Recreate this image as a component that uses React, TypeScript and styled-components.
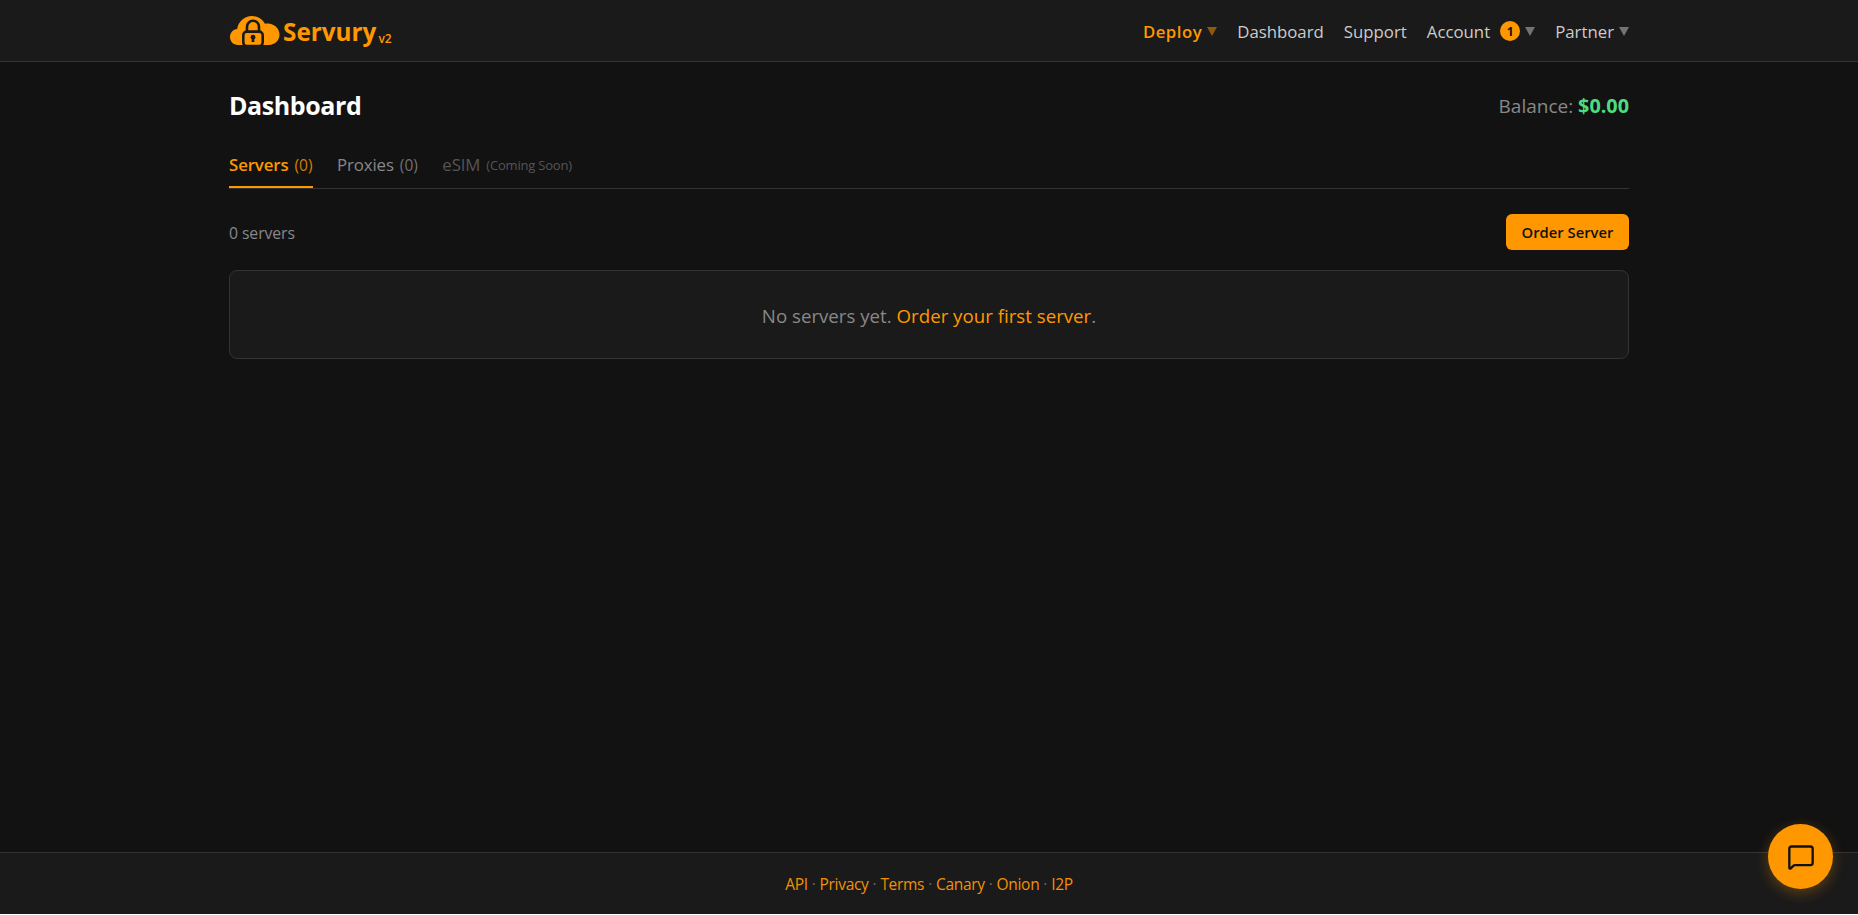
import React from "react";
import styled, { createGlobalStyle } from "styled-components";
import { MessageSquare } from "lucide-react";

const Global = createGlobalStyle`
  html, body { margin: 0; padding: 0; background: #fff; }
  body { font-family: "Open Sans", "Noto Sans", "Liberation Sans", sans-serif; }
  a { text-decoration: none; color: inherit; }
`;

const Page = styled.div`
  height: calc(100vh - 1px);
  display: flex;
  flex-direction: column;
  background: #121212;
  overflow: hidden;
`;

const TopBar = styled.header`
  flex: none;
  height: 61px;
  background: #1a1a1a;
  border-bottom: 1px solid #333;
`;

const Wrap = styled.div`
  width: 1400px;
  margin: 0 auto;
`;

const TopInner = styled(Wrap)`
  height: 100%;
  display: flex;
  align-items: center;
  justify-content: space-between;
`;

const Brand = styled.a`
  display: flex;
  align-items: center;
  gap: 3px;
  color: #ff9800;
`;

const BrandName = styled.span`
  font-size: 24.3px;
  font-weight: 700;
  padding-top: 1px;
`;

const BrandVersion = styled.span`
  font-size: 12px;
  font-weight: 600;
  margin: 15px 0 0 -1px;
`;

const Nav = styled.nav`
  display: flex;
  align-items: center;
  gap: 20px;
  padding-top: 1px;
`;

const NavItem = styled.a<{ $active?: boolean }>`
  display: flex;
  align-items: center;
  font-size: 16.8px;
  letter-spacing: ${(p) => (p.$active ? "0.5px" : "0")};
  font-weight: ${(p) => (p.$active ? 600 : 400)};
  color: ${(p) => (p.$active ? "#ff9800" : "#ccc")};
`;

const Caret = styled.span`
  width: 0;
  height: 0;
  margin-left: 5px;
  border-left: 5px solid transparent;
  border-right: 5px solid transparent;
  border-top: 9px solid currentColor;
  opacity: 0.5;
`;

const Badge = styled.span`
  width: 20px;
  height: 20px;
  margin-left: 10px;
  border-radius: 50%;
  background: #ff9800;
  color: #121212;
  font-size: 12px;
  font-weight: 700;
  display: flex;
  align-items: center;
  justify-content: center;
`;

const Main = styled(Wrap)`
  flex: 1;
  padding-top: 23px;
`;

const TitleRow = styled.div`
  height: 40px;
  display: flex;
  align-items: center;
  justify-content: space-between;
`;

const Title = styled.h1`
  margin: 0;
  font-size: 25px;
  font-weight: 700;
  letter-spacing: -0.4px;
  color: #fff;
`;

const Balance = styled.div`
  font-size: 19px;
  color: #888;
`;

const BalanceValue = styled.strong`
  font-weight: 700;
  font-size: 19.8px;
  color: #4ade80;
`;

const Tabs = styled.div`
  display: flex;
  gap: 24.5px;
  margin-top: 20px;
  height: 43px;
  border-bottom: 1px solid #333;
`;

const Tab = styled.a<{ $active?: boolean; $disabled?: boolean }>`
  height: 43px;
  box-sizing: border-box;
  display: flex;
  align-items: center;
  gap: 6px;
  padding-bottom: 2px;
  font-size: 16.8px;
  letter-spacing: -0.1px;
  font-weight: ${(p) => (p.$active ? 600 : 400)};
  color: ${(p) => (p.$active ? "#ff9800" : p.$disabled ? "#555" : "#888")};
  border-bottom: 2px solid ${(p) => (p.$active ? "#ff9800" : "transparent")};
`;

const TabNote = styled.small<{ $tiny?: boolean }>`
  font-size: ${(p) => (p.$tiny ? "13px" : "15.5px")};
  letter-spacing: ${(p) => (p.$tiny ? "-0.2px" : "0")};
  font-weight: 400;
  opacity: ${(p) => (p.$tiny ? 1 : 0.8)};
`;

const ListBar = styled.div`
  margin-top: 25px;
  height: 36px;
  display: flex;
  align-items: center;
  justify-content: space-between;
`;

const Count = styled.span`
  font-size: 15.8px;
  letter-spacing: -0.1px;
  padding-top: 1px;
  color: #888;
`;

const OrderButton = styled.button`
  width: 123px;
  height: 36px;
  padding: 0;
  border: 0;
  border-radius: 6px;
  background: #ff9800;
  color: #111;
  font: 600 14.8px "Open Sans", sans-serif;
`;

const EmptyCard = styled.div`
  margin-top: 20px;
  height: 89px;
  box-sizing: border-box;
  border: 1px solid #333;
  border-radius: 8px;
  background: #1a1a1a;
  display: flex;
  align-items: center;
  justify-content: center;
  padding-top: 2px;
  font-size: 18.7px;
  color: #888;
`;

const Accent = styled.a`
  color: #ff9800;
  white-space: pre;
`;

const Footer = styled.footer`
  flex: none;
  height: 62px;
  box-sizing: border-box;
  background: #1a1a1a;
  border-top: 1px solid #333;
  display: flex;
  align-items: center;
  justify-content: center;
  font-size: 15.5px;
  letter-spacing: -0.3px;
  color: #666;
`;

const FootLink = styled.a`
  color: #ff9800;
  opacity: 0.95;
`;

const Dot = styled.span`
  margin: 0 4px;
`;

const ChatButton = styled.button`
  position: fixed;
  right: 25px;
  bottom: 26px;
  width: 65px;
  height: 65px;
  padding: 0;
  border: 0;
  border-radius: 50%;
  background: #ff9800;
  color: #111;
  display: flex;
  align-items: center;
  justify-content: center;
  box-shadow: 0 4px 14px rgba(255, 152, 0, 0.3);
`;

const LogoMark = () => (
  <svg width="51" height="32" viewBox="0 0 51 32" aria-hidden="true">
    <path
      fill="#ff9800"
      d="M9 30C4.4 30 1 26.4 1 22C1 17.8 4.2 14.4 8.2 14C9.2 6.6 15.4 1 23 1C28.6 1 33.6 4 36 8.8C36.9 8.6 37.8 8.5 38.8 8.5C45.3 8.5 50.5 13.6 50.5 19.6C50.5 25.5 45.7 30 40 30Z"
    />
    <path fill="none" stroke="#1a1a1a" strokeWidth="2.6" d="M18 17V12C18 8.2 20.8 5.8 24 5.8C27.2 5.8 30 8.2 30 12V17" />
    <rect x="14.3" y="16.6" width="19.4" height="14.4" rx="3.5" fill="#ff9800" stroke="#1a1a1a" strokeWidth="2.6" />
    <circle cx="24" cy="22.2" r="2.4" fill="#1a1a1a" />
    <path fill="#1a1a1a" d="M23 22.5h2l0.5 4.5h-3z" />
  </svg>
);

export default function App() {
  return (
    <Page>
      <Global />
      <TopBar>
        <TopInner>
          <Brand href="#">
            <LogoMark />
            <BrandName>Servury</BrandName>
            <BrandVersion>v2</BrandVersion>
          </Brand>
          <Nav>
            <NavItem $active href="#">Deploy<Caret /></NavItem>
            <NavItem href="#">Dashboard</NavItem>
            <NavItem href="#">Support</NavItem>
            <NavItem href="#">Account<Badge>1</Badge><Caret /></NavItem>
            <NavItem href="#">Partner<Caret /></NavItem>
          </Nav>
        </TopInner>
      </TopBar>
      <Main>
        <TitleRow>
          <Title>Dashboard</Title>
          <Balance>Balance: <BalanceValue>$0.00</BalanceValue></Balance>
        </TitleRow>
        <Tabs>
          <Tab $active href="#">Servers <TabNote>(0)</TabNote></Tab>
          <Tab href="#">Proxies <TabNote>(0)</TabNote></Tab>
          <Tab $disabled href="#">eSIM <TabNote $tiny>(Coming Soon)</TabNote></Tab>
        </Tabs>
        <ListBar>
          <Count>0 servers</Count>
          <OrderButton>Order Server</OrderButton>
        </ListBar>
        <EmptyCard>
          No servers yet.&nbsp;<Accent href="#">Order your first server</Accent>.
        </EmptyCard>
      </Main>
      <Footer>
        <FootLink href="#">API</FootLink><Dot>·</Dot>
        <FootLink href="#">Privacy</FootLink><Dot>·</Dot>
        <FootLink href="#">Terms</FootLink><Dot>·</Dot>
        <FootLink href="#">Canary</FootLink><Dot>·</Dot>
        <FootLink href="#">Onion</FootLink><Dot>·</Dot>
        <FootLink href="#">I2P</FootLink>
      </Footer>
      <ChatButton aria-label="Chat">
        <MessageSquare size={28} strokeWidth={2} />
      </ChatButton>
    </Page>
  );
}
